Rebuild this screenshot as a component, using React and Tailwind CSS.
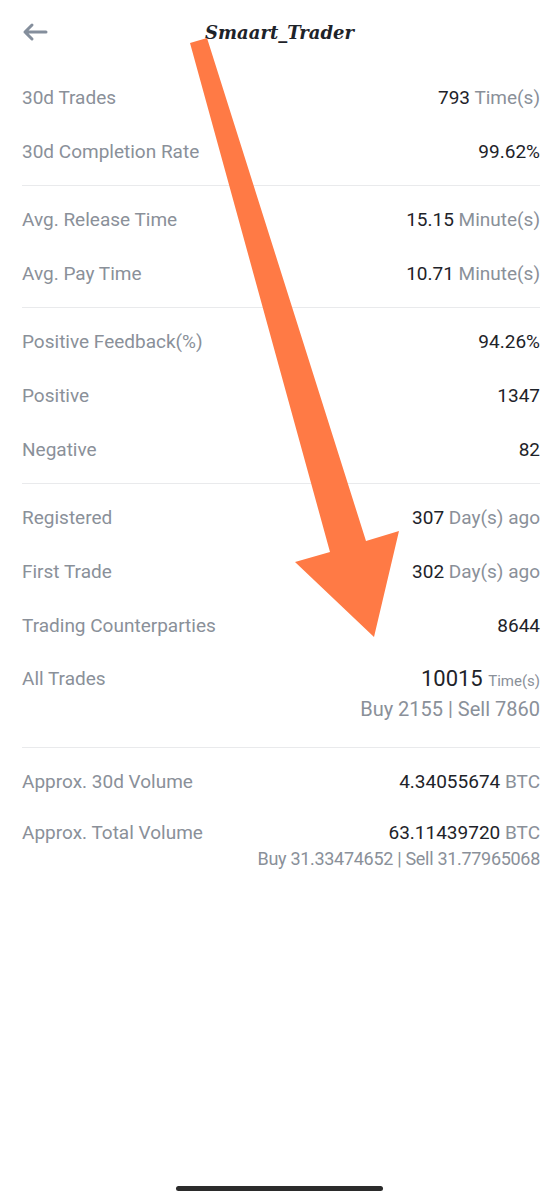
import { Fragment } from "react";

const SECTIONS = [
  [
    { label: "30d Trades", value: "793", unit: "Time(s)" },
    { label: "30d Completion Rate", value: "99.62%" },
  ],
  [
    { label: "Avg. Release Time", value: "15.15", unit: "Minute(s)" },
    { label: "Avg. Pay Time", value: "10.71", unit: "Minute(s)" },
  ],
  [
    { label: "Positive Feedback(%)", value: "94.26%" },
    { label: "Positive", value: "1347" },
    { label: "Negative", value: "82" },
  ],
];

function Row({ label, value, unit }) {
  return (
    <div className="h-[54px] flex items-center justify-between">
      <span className="text-[#8a9099]">{label}</span>
      <span className="text-[#1e2329]">
        {value}
        {unit && <span className="text-[#8a9099]"> {unit}</span>}
      </span>
    </div>
  );
}

function Divider() {
  return <div className="h-px bg-[#e9eaec]" />;
}

function Arrow() {
  return (
    <svg
      className="absolute left-0 top-0 pointer-events-none"
      width="559"
      height="1200"
      viewBox="0 0 559 1200"
    >
      <polygon
        points="190,43 207,38 366,541 399,531 374,637 295,562 330,552"
        fill="#ff7a45"
      />
    </svg>
  );
}

export default function App() {
  return (
    <div
      className="relative min-h-[1200px] w-[559px] bg-white flex flex-col text-[19px] leading-[28px]"
      style={{ fontFamily: "Roboto, 'Liberation Sans', sans-serif" }}
    >
      {/* header */}
      <div className="h-[65px] relative flex items-center justify-center px-[22px]">
        <button className="absolute left-[22px] top-[22px] text-[#848e9c]">
          <svg width="26" height="20" viewBox="0 0 26 20" fill="none" stroke="currentColor" strokeWidth="3" strokeLinecap="round" strokeLinejoin="round">
            <path d="M24 10H3M10 3L3 10l7 7" />
          </svg>
        </button>
        <h1
          className="text-[18px] font-bold italic text-[#1e2329]"
          style={{ fontFamily: "'DejaVu Serif', serif" }}
        >
          Smaart_Trader
        </h1>
      </div>

      <div className="px-[22px] pr-[19px]">
        {SECTIONS.map((rows, i) => (
          <Fragment key={i}>
            <div className={`${i === 0 ? "pt-[6px]" : "pt-[7px]"} pb-[6px]`}>
              {rows.map((r) => (
                <Row key={r.label} {...r} />
              ))}
            </div>
            <Divider />
          </Fragment>
        ))}

        <div className="pt-[7px] pb-[6px]">
          <Row label="Registered" value="307" unit="Day(s) ago" />
          <Row label="First Trade" value="302" unit="Day(s) ago" />
          <Row label="Trading Counterparties" value="8644" />
          <div className="pt-[12px] pb-[18px] flex justify-between">
            <span className="text-[#8a9099]">All Trades</span>
            <div className="flex flex-col items-end">
              <span className="text-[#1e2329] text-[22px]">
                10015 <span className="text-[#8a9099] text-[15px]">Time(s)</span>
              </span>
              <span className="text-[#8a9099] text-[20px]">Buy 2155 | Sell 7860</span>
            </div>
          </div>
        </div>
        <Divider />

        <div className="pt-[7px]">
          <Row label="Approx. 30d Volume" value="4.34055674" unit="BTC" />
          <div className="pt-[11px] flex justify-between leading-[26px]">
            <span className="text-[#8a9099]">Approx. Total Volume</span>
            <div className="flex flex-col items-end">
              <span className="text-[#1e2329]">
                63.11439720 <span className="text-[#8a9099]">BTC</span>
              </span>
              <span className="text-[#8a9099] text-[18px] tracking-[-0.3px] whitespace-nowrap">
                Buy 31.33474652 | Sell 31.77965068
              </span>
            </div>
          </div>
        </div>
      </div>

      <div className="mt-auto pb-[9px] flex justify-center">
        <div className="w-[207px] h-[5px] rounded-full bg-[#2b2b2b]" />
      </div>

      <Arrow />
    </div>
  );
}
